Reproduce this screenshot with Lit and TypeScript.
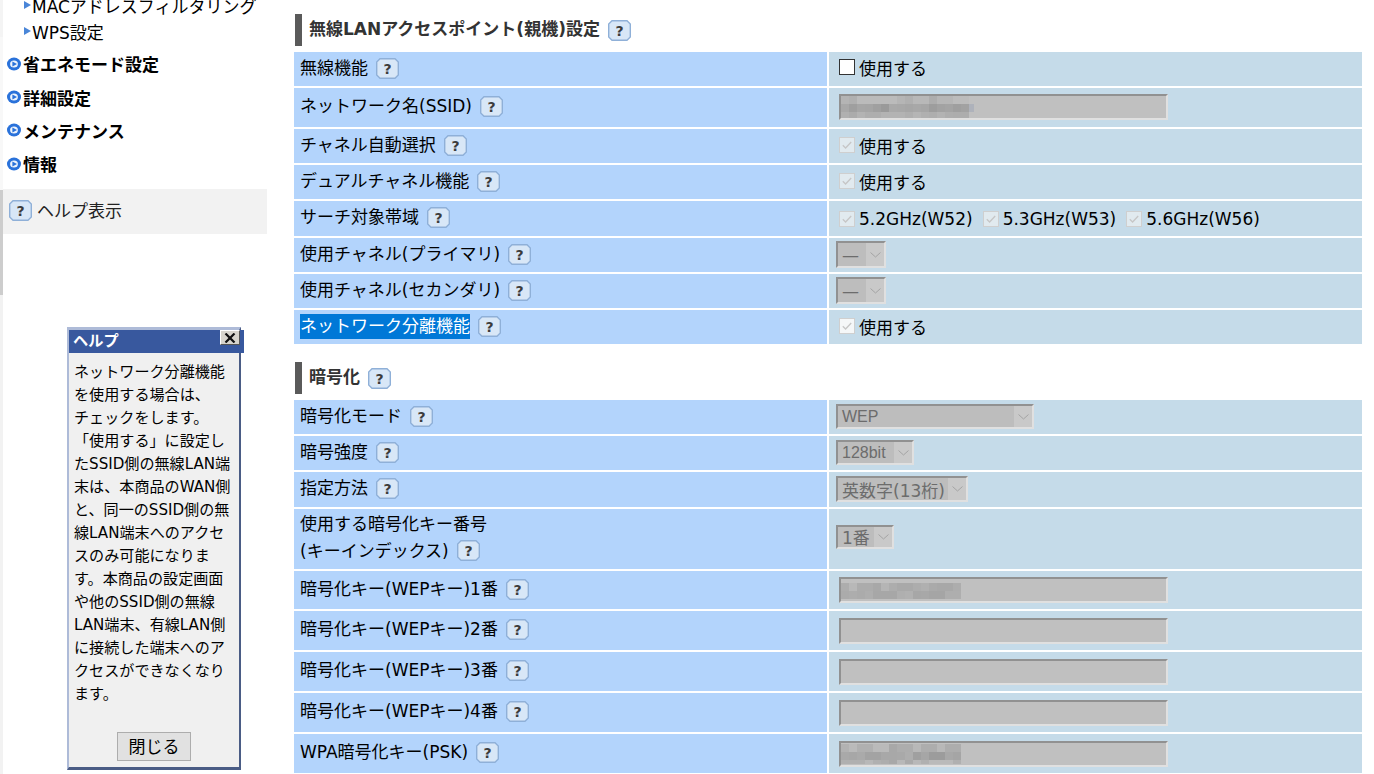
import { LitElement, html, css, svg } from "lit";
import { customElement } from "lit/decorators.js";

const helpIcon = () => html`<svg class="hi" width="23" height="21" viewBox="0 0 23 21"><polygon points="4,0.7 19,0.7 22.3,4 22.3,17 19,20.3 4,20.3 0.7,17 0.7,4" fill="#d8e7f7" stroke="#8fb0d8" stroke-width="1.4"/><text x="11.5" y="16" text-anchor="middle" font-family="'DejaVu Sans',sans-serif" font-weight="700" font-size="14" fill="#3c3c3c">?</text></svg>`;

interface Mosaic { rows: number[][]; heights: number[]; blue?: boolean; top: number; }
type Ctl =
  | { t: "check"; label: string; off?: boolean; bright?: boolean }
  | { t: "multi"; labels: string[] }
  | { t: "input"; mosaic?: Mosaic; up?: boolean }
  | { t: "select"; text: string; w: number; h: number; small?: boolean; mt?: number };

interface Row { label: string[]; h: number; ctl: Ctl; selected?: boolean; }

const M1: Mosaic = {
  rows: [
    [0xb4, 0xb0, 0xbb, 0xbb, 0xbb, 0xbb, 0xbb, 0xb5, 0xb0, 0xb8, 0xb8, 0xad, 0xb6, 0xb6, 0xbc, 0xbc],
    [0xa8, 0x9f, 0xa6, 0xa5, 0xa0, 0x9a, 0xa9, 0xa8, 0xa6, 0xa8, 0xa6, 0x9d, 0xa2, 0xa4, 0x9f, 0xa2],
    [0xb0, 0xab, 0xb3, 0xae, 0xae, 0xb3, 0xb3, 0xb3, 0xaf, 0xb5, 0xb0, 0xae, 0xb3, 0xae, 0xad, 0xad],
  ],
  heights: [8, 8, 6],
  blue: true,
  top: 0,
};
const M2: Mosaic = {
  rows: [
    [0xad, 0xb8, 0xac, 0xac, 0xa8, 0xb5, 0xad, 0xa9, 0xa9, 0xad, 0xb0, 0xaa, 0xa8, 0xa8, 0xad],
    [0xab, 0xad, 0xab, 0xae, 0xa7, 0xa7, 0xa7, 0xaf, 0xb1, 0xa7, 0xa8, 0xa5, 0xa5, 0xae, 0xae],
  ],
  heights: [8, 8],
  top: 4,
};
const M3: Mosaic = {
  rows: [
    [0xb2, 0xba, 0xb0, 0xb0, 0xba, 0xba, 0xa8, 0xad, 0xad, 0xb8, 0xad, 0xad, 0xb8, 0xad, 0xad],
    [0xa9, 0xa7, 0xaa, 0xa3, 0xa3, 0xa8, 0xa8, 0xa9, 0xae, 0xa0, 0xa6, 0x9c, 0x9c, 0xa8, 0xa5],
    [0xb0, 0xb0, 0xb0, 0xb8, 0xb0, 0xad, 0xa8, 0xb8, 0xaa, 0xb8, 0xb0, 0xba, 0xba, 0xba, 0xb0],
  ],
  heights: [8, 8, 4],
  top: 1,
};

const sec1: Row[] = [
  { label: ["無線機能"], h: 34, ctl: { t: "check", label: "使用する", off: true } },
  { label: ["ネットワーク名(SSID)"], h: 39, ctl: { t: "input", mosaic: M1, up: true } },
  { label: ["チャネル自動選択"], h: 34, ctl: { t: "check", label: "使用する" } },
  { label: ["デュアルチャネル機能"], h: 34, ctl: { t: "check", label: "使用する" } },
  { label: ["サーチ対象帯域"], h: 35, ctl: { t: "multi", labels: ["5.2GHz(W52)", "5.3GHz(W53)", "5.6GHz(W56)"] } },
  { label: ["使用チャネル(プライマリ)"], h: 34, ctl: { t: "select", text: "—", w: 50, h: 27 } },
  { label: ["使用チャネル(セカンダリ)"], h: 34, ctl: { t: "select", text: "—", w: 50, h: 27 } },
  { label: ["ネットワーク分離機能"], h: 34, selected: true, ctl: { t: "check", label: "使用する", bright: true } },
];
const sec2: Row[] = [
  { label: ["暗号化モード"], h: 34, ctl: { t: "select", text: "WEP", w: 198, h: 25, small: true } },
  { label: ["暗号強度"], h: 34, ctl: { t: "select", text: "128bit", w: 78, h: 25, small: true } },
  { label: ["指定方法"], h: 35, ctl: { t: "select", text: "英数字(13桁)", w: 132, h: 26 } },
  { label: ["使用する暗号化キー番号", "(キーインデックス)"], h: 60, ctl: { t: "select", text: "1番", w: 58, h: 24, mt: -5 } },
  { label: ["暗号化キー(WEPキー)1番"], h: 38, ctl: { t: "input", mosaic: M2 } },
  { label: ["暗号化キー(WEPキー)2番"], h: 39, ctl: { t: "input" } },
  { label: ["暗号化キー(WEPキー)3番"], h: 39, ctl: { t: "input" } },
  { label: ["暗号化キー(WEPキー)4番"], h: 39, ctl: { t: "input" } },
  { label: ["WPA暗号化キー(PSK)"], h: 39, ctl: { t: "input", mosaic: M3 } },
];

const popupLines = [
  "ネットワーク分離機能", "を使用する場合は、", "チェックをします。", "「使用する」に設定し",
  "たSSID側の無線LAN端", "末は、本商品のWAN側", "と、同一のSSID側の無", "線LAN端末へのアクセ",
  "スのみ可能になりま", "す。本商品の設定画面", "や他のSSID側の無線", "LAN端末、有線LAN側",
  "に接続した端末へのア", "クセスができなくなり", "ます。",
];

@customElement("app-root")
export class AppRoot extends LitElement {
  static styles = css`
    :host {
      display: block;
      width: 1374px;
      height: 774px;
      overflow: hidden;
      position: relative;
      background: #fff;
      color: #000;
      font-family: "DejaVu Sans", "Noto Sans CJK JP", sans-serif;
      font-size: 17px;
    }
    .page { display: flex; height: 774px; overflow: hidden; }
    .strip { width: 3px; flex: none; display: flex; flex-direction: column; }
    .s1 { height: 37px; background: #f4f4f4; }
    .s2 { height: 153px; background: #f8f8f8; }
    .s3 { height: 105px; background: #cdcdcd; }
    .s4 { flex: 1; background: #f2f2f2; }

    .side { width: 264px; flex: none; overflow: hidden; }
    .sub { display: flex; align-items: center; height: 26px; padding-left: 21px; gap: 1px; white-space: nowrap; font-size: 17px; }
    .sub.first { margin-top: -8px; }
    .group { display: flex; align-items: center; height: 33.4px; padding-left: 4px; gap: 2px; font-weight: 700; font-size: 17px; white-space: nowrap; }
    .sublist { margin-bottom: 3px; }
    .helpnav { margin-top: 8px; height: 45px; background: #f2f2f2; display: flex; align-items: center; padding-left: 6px; gap: 5px; font-size: 17px; color: #222; padding-bottom: 1px; box-sizing: border-box; }
    .helpnav span { margin-top: -2px; }

    .main { margin-left: 27px; width: 1068px; flex: none; padding-top: 14px; }
    .head { display: flex; align-items: center; height: 32px; margin-bottom: 6px; font-weight: 700; color: #333; margin-left: 1px; }
    .head .bar { width: 7px; height: 32px; background: #5a5a5a; margin-right: 7px; flex: none; }
    .head .title { font-size: 17px; margin-top: -6px; }
    .head .hi { margin-left: 8px; }
    .table { display: flex; flex-direction: column; gap: 2px; margin-bottom: 18px; }
    .row { display: grid; grid-template-columns: 533px 533px; gap: 2px; }
    .lab { background: #b3d4fc; padding-left: 6px; display: flex; align-items: center; padding-bottom: 2px; box-sizing: border-box; white-space: nowrap; font-size: 17px; color: #000; }
    .lab .txt { line-height: 27px; }
    .lab .hi { margin-left: 8px; flex: none; }
    .lab .stack { display: block; }
    .lab .stack .hi { vertical-align: -4px; }
    .sel { background: #0078d7; color: #fff; line-height: 25px; display: inline-block; }
    .val { background: #c5dbe9; padding-left: 10px; display: flex; align-items: center; box-sizing: border-box; white-space: nowrap; font-size: 17px; }
    .val.sel-cell { padding-left: 7px; }
    .val.plain { padding-bottom: 2px; }
    .val.top { padding-bottom: 4px; }
    .cb { width: 16px; height: 16px; box-sizing: border-box; border: 1px solid #cfcfcf; background: #e1eaef; margin-right: 4px; flex: none; display: block; }
    .cb.off { border-color: #333; background: #fff; }
    .cb.bright { background: #f5f7f8; }
    .cbl { display: flex; align-items: center; margin-right: 10px; color: #000; }
    .input { width: 329px; height: 26px; box-sizing: border-box; border-style: solid; border-width: 2px; border-color: #919191 #e0e0e0 #e0e0e0 #919191; background: #c0c0c0; overflow: hidden; }
    .input.up { margin-top: -2px; }
    .mos { display: block; }
    .select { box-sizing: border-box; border-style: solid; border-width: 2px; border-color: #919191 #e0e0e0 #e0e0e0 #919191; background: #bdbdbd; display: flex; align-items: stretch; color: #6c6c6c; font-size: 17px; margin-top: -1px; }
    .select.small { font-family: "Liberation Sans", sans-serif; font-size: 16px; }
    .select .t { flex: 1; padding-left: 4px; display: flex; align-items: center; white-space: nowrap; overflow: hidden; }
    .select .a { width: 18px; flex: none; background: #c9c9c9; display: flex; align-items: center; justify-content: center; }

    .popup { position: absolute; left: 67px; top: 327px; width: 174px; height: 443px; box-sizing: border-box; border-style: solid; border-width: 3px 2px 3px 2px; border-color: #aebbd8 #4a5c85 #4a5c85 #aebbd8; background: #f0f0f0; display: flex; flex-direction: column; }
    .ptitle { height: 23px; margin-right: -5px; flex: none; background: #38589e; color: #fff; font-weight: 700; font-size: 15.2px; display: flex; align-items: flex-start; justify-content: space-between; padding-left: 4px; padding-right: 4px; }
    .ptitle .ti { line-height: 22px; }
    .ptitle .x { width: 20px; height: 15px; box-sizing: border-box; background: #d8d5cd; border: 1px solid; border-color: #fff #555 #555 #fff; display: flex; align-items: center; justify-content: center; }
    .pbody { flex: 1; padding: 8px 0 0 5px; font-size: 15.1px; line-height: 23px; color: #000; white-space: nowrap; }
    .pbody div { height: 23px; }
    .pfoot { flex: none; display: flex; justify-content: center; padding-bottom: 6px; }
    .btn { width: 74px; height: 29px; box-sizing: border-box; background: #e1e1e1; border: 1px solid #adadad; font-size: 17px; color: #000; display: flex; align-items: center; justify-content: center; padding-bottom: 2px; }
  `;

  private check(off?: boolean, bright?: boolean) {
    const cls = `cb${off ? " off" : ""}${bright ? " bright" : ""}`;
    return html`<svg class=${cls} viewBox="0 0 14 14">${off ? "" : svg`<path d="M2.8 7.2 L5.6 10 L11.2 4" fill="none" stroke="#c6c6c6" stroke-width="1.3"/>`}</svg>`;
  }

  private mosaic(m: Mosaic) {
    let y = 0;
    const width = m.rows[0].length * 8 + (m.blue ? 5 : 0);
    const total = m.heights.reduce((a, b) => a + b, 0);
    const rects = m.rows.map((r, i) => {
      const out = r.map((g, j) => svg`<rect x=${j * 8} y=${y} width="8" height=${m.heights[i]} fill=${`rgb(${g},${g},${g})`}/>`);
      y += m.heights[i];
      return out;
    });
    const extra = m.blue ? svg`<rect x=${width - 5} y=${m.heights[0]} width="5" height=${m.heights[1]} fill="#aeb2bb"/>` : "";
    return html`<svg class="mos" width=${width} height=${total} viewBox="0 0 ${width} ${total}" style="margin-top:${m.top}px">${rects}${extra}</svg>`;
  }

  private ctl(c: Ctl) {
    switch (c.t) {
      case "check":
        return html`<span class="cbl">${this.check(c.off, c.bright)}${c.label}</span>`;
      case "multi":
        return c.labels.map((l) => html`<span class="cbl">${this.check()}${l}</span>`);
      case "input":
        return html`<div class="input ${c.up ? "up" : ""}">${c.mosaic ? this.mosaic(c.mosaic) : ""}</div>`;
      case "select":
        return html`<div class="select ${c.small ? "small" : ""}" style="width:${c.w}px;height:${c.h}px;margin-top:${c.mt ?? -1}px"><span class="t">${c.text}</span><span class="a"><svg width="11" height="6" viewBox="0 0 11 6"><path d="M0.5 0.5 L5.5 5 L10.5 0.5" fill="none" stroke="#a4a4a4" stroke-width="1"/></svg></span></div>`;
    }
  }

  private row(r: Row, i: number) {
    const label = r.label.length > 1
      ? html`<span class="stack txt">${r.label[0]}<br />${r.label[1]}${helpIcon()}</span>`
      : r.selected
        ? html`<span class="sel">${r.label[0]}</span>${helpIcon()}`
        : html`<span class="txt">${r.label[0]}</span>${helpIcon()}`;
    const cls = r.ctl.t === "select" ? "sel-cell" : r.ctl.t === "check" ? (i === 0 ? "top" : "plain") : "";
    return html`<div class="row" style="height:${r.h}px">
      <div class="lab">${label}</div>
      <div class="val ${cls}">${this.ctl(r.ctl)}</div>
    </div>`;
  }

  render() {
    const tri = html`<svg width="7" height="8" viewBox="0 0 7 8"><polygon points="0,0 7,4 0,8" fill="#4a86d8"/></svg>`;
    const bullet = html`<svg width="14" height="14" viewBox="0 0 14 14"><ellipse cx="7" cy="7" rx="7" ry="6.4" fill="#2a72da"/><ellipse cx="7" cy="7" rx="3.9" ry="3.6" fill="#eef4fc"/><polygon points="5.4,4.4 10,7 5.4,9.6" fill="#2a72da"/></svg>`;
    return html`
      <div class="page">
        <div class="strip"><div class="s1"></div><div class="s2"></div><div class="s3"></div><div class="s4"></div></div>
        <nav class="side">
          <div class="sublist">
            <div class="sub first">${tri}<span>MACアドレスフィルタリング</span></div>
            <div class="sub">${tri}<span>WPS設定</span></div>
          </div>
          ${["省エネモード設定", "詳細設定", "メンテナンス", "情報"].map((g) => html`<div class="group">${bullet}<span>${g}</span></div>`)}
          <div class="helpnav">${helpIcon()}<span>ヘルプ表示</span></div>
        </nav>
        <main class="main">
          <div class="head"><span class="bar"></span><span class="title">無線LANアクセスポイント(親機)設定</span>${helpIcon()}</div>
          <div class="table">${sec1.map((r, i) => this.row(r, i))}</div>
          <div class="head"><span class="bar"></span><span class="title">暗号化</span>${helpIcon()}</div>
          <div class="table">${sec2.map((r, i) => this.row(r, i))}</div>
        </main>
      </div>
      <aside class="popup">
        <div class="ptitle"><span class="ti">ヘルプ</span><span class="x"><svg width="12" height="10" viewBox="0 0 12 10"><path d="M1.5 0.5 L10.5 9.5 M10.5 0.5 L1.5 9.5" stroke="#111" stroke-width="2.2"/></svg></span></div>
        <div class="pbody">${popupLines.map((l) => html`<div>${l}</div>`)}</div>
        <div class="pfoot"><div class="btn">閉じる</div></div>
      </aside>
    `;
  }
}
